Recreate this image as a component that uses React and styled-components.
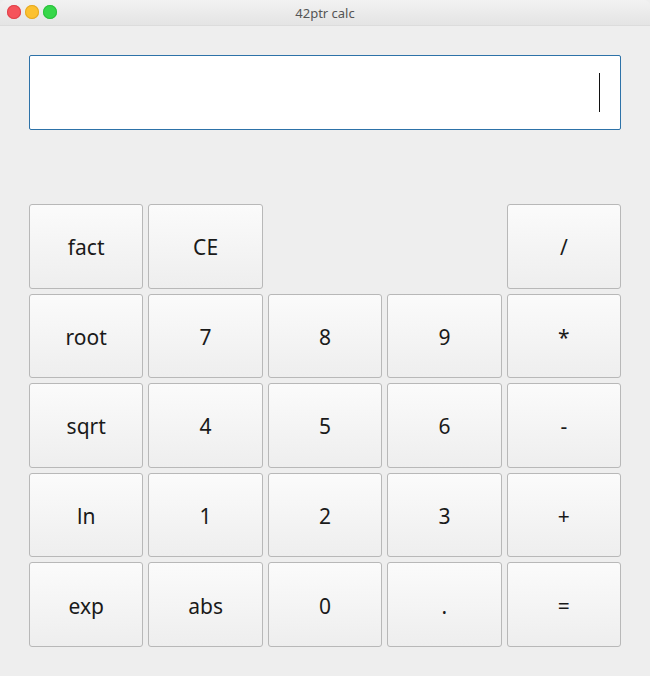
import React from 'react';
import styled, { createGlobalStyle } from 'styled-components';

const Global = createGlobalStyle`
  html, body {
    margin: 0;
    padding: 0;
    background: #eeeeee;
  }
  body {
    font-family: 'Noto Sans', 'Open Sans', sans-serif;
  }
`;

const Window = styled.div`
  width: 650px;
  height: 676px;
  display: flex;
  flex-direction: column;
  background: #eeeeee;
  overflow: hidden;
`;

const TitleBar = styled.div`
  position: relative;
  height: 25px;
  display: flex;
  align-items: center;
  justify-content: center;
  background: linear-gradient(#f2f2f2, #e4e4e4);
  border-bottom: 1px solid #dcdcdc;
  border-radius: 6px 6px 0 0;
`;

const Lights = styled.div`
  position: absolute;
  left: 7px;
  top: 5px;
  display: flex;
  gap: 4px;
`;

const Light = styled.span`
  width: 14px;
  height: 14px;
  border-radius: 50%;
  background: ${({ color }) => color};
  box-shadow: inset 0 0 0 1px ${({ edge }) => edge};
`;

const Title = styled.div`
  font-size: 13px;
  color: #555555;
`;

const Content = styled.div`
  padding: 29px 29px 0 29px;
  display: flex;
  flex-direction: column;
`;

const Display = styled.div`
  box-sizing: border-box;
  height: 75px;
  border: 1px solid #2d72a8;
  border-radius: 2px;
  background: #ffffff;
  display: flex;
  align-items: center;
  justify-content: flex-end;
  padding-right: 20px;
`;

const Caret = styled.span`
  width: 1px;
  height: 39px;
  background: #111111;
`;

const Grid = styled.div`
  margin-top: 74px;
  height: 443px;
  display: grid;
  grid-template-columns: repeat(5, 1fr);
  grid-template-rows: repeat(5, 1fr);
  column-gap: 5px;
  row-gap: 5px;
`;

const Key = styled.button`
  box-sizing: border-box;
  grid-column: ${({ col }) => col || 'auto'};
  border: 1px solid #b8b8b8;
  border-radius: 3px;
  background: linear-gradient(#fbfbfb, #eeeeee);
  font-family: 'Noto Sans', 'Open Sans', sans-serif;
  font-size: 21px;
  color: #1a1a1a;
  padding: 2px 0 0 0;
  margin: 0;
`;

const rows = [
  [['fact'], ['CE'], ['/', 5]],
  [['root'], ['7'], ['8'], ['9'], ['*']],
  [['sqrt'], ['4'], ['5'], ['6'], ['-']],
  [['ln'], ['1'], ['2'], ['3'], ['+']],
  [['exp'], ['abs'], ['0'], ['.'], ['=']],
];

const App = () => (
  <Window>
    <Global />
    <TitleBar>
      <Lights>
        <Light color="#f5535b" edge="#e0434b" />
        <Light color="#fcc12f" edge="#e5a923" />
        <Light color="#36d74a" edge="#2bc03d" />
      </Lights>
      <Title>42ptr calc</Title>
    </TitleBar>
    <Content>
      <Display>
        <Caret />
      </Display>
      <Grid>
        {rows.map((row, i) => row.map(([label, col]) => (
          <Key key={`${i}-${label}`} col={col}>{label}</Key>
        )))}
      </Grid>
    </Content>
  </Window>
);

export default App;
